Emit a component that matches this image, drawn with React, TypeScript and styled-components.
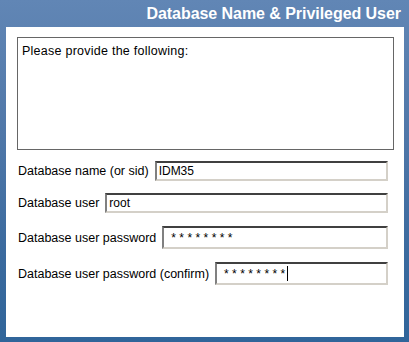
import React from "react";
import styled, { createGlobalStyle } from "styled-components";

const GlobalStyle = createGlobalStyle`
  html, body {
    margin: 0;
    padding: 0;
  }
  body {
    font-family: "Liberation Sans", Arial, sans-serif;
  }
`;

const Frame = styled.div`
  width: 409px;
  height: 342px;
  box-sizing: border-box;
  background: linear-gradient(180deg, #6186b5 0%, #4f77a8 40%, #3a6a9e 75%, #30659a 100%);
  display: flex;
  flex-direction: column;
`;

const Header = styled.div`
  height: 27px;
  display: flex;
  align-items: center;
  justify-content: flex-end;
  padding-right: 8px;
  color: #ffffff;
  font-size: 16px;
  font-weight: bold;
  letter-spacing: -0.05px;
`;

const Panel = styled.div`
  margin: 0 5px 5px 6px;
  flex: 1;
  background: #ffffff;
  padding: 10px 10px 0 11px;
  box-sizing: border-box;
  display: flex;
  flex-direction: column;
`;

const Notes = styled.div`
  height: 113px;
  box-sizing: border-box;
  border: 1px solid #666666;
  padding: 6px 4px;
  font-size: 12.5px;
  letter-spacing: 0.25px;
  color: #000;
`;

const Form = styled.div`
  display: flex;
  flex-direction: column;
  padding: 11px 6px 0 1px;
`;

const Row = styled.div<{ $gap: number }>`
  display: flex;
  align-items: center;
  gap: 6px;
  margin-bottom: ${(p) => p.$gap}px;
`;

const Label = styled.span`
  font-size: 12.5px;
  color: #000;
  white-space: nowrap;
`;

const Field = styled.div<{ $tall?: boolean }>`
  flex: 1;
  height: ${(p) => (p.$tall ? 23 : 20)}px;
  box-sizing: border-box;
  border-top: 2px solid #404040;
  border-left: 2px solid #808080;
  border-right: 2px solid #d4d0c8;
  border-bottom: 2px solid #d4d0c8;
  display: flex;
  align-items: center;
  padding-left: 2px;
  font-size: 12px;
  color: #000;
  background: #fff;
`;

const Mask = styled.span`
  letter-spacing: 3.4px;
  font-size: 12px;
  padding-left: 5px;
`;

const Caret = styled.span`
  display: inline-block;
  width: 1px;
  height: 15px;
  background: #000;
  margin-left: -2px;
`;

export default function App() {
  return (
    <>
      <GlobalStyle />
      <Frame>
        <Header>Database Name &amp; Privileged User</Header>
        <Panel>
          <Notes>Please provide the following:</Notes>
          <Form>
            <Row $gap={12}>
              <Label>Database name (or sid)</Label>
              <Field>IDM35</Field>
            </Row>
            <Row $gap={13}>
              <Label>Database user</Label>
              <Field>root</Field>
            </Row>
            <Row $gap={13}>
              <Label>Database user password</Label>
              <Field $tall>
                <Mask>********</Mask>
              </Field>
            </Row>
            <Row $gap={0}>
              <Label>Database user password (confirm)</Label>
              <Field $tall>
                <Mask>********</Mask>
                <Caret />
              </Field>
            </Row>
          </Form>
        </Panel>
      </Frame>
    </>
  );
}
